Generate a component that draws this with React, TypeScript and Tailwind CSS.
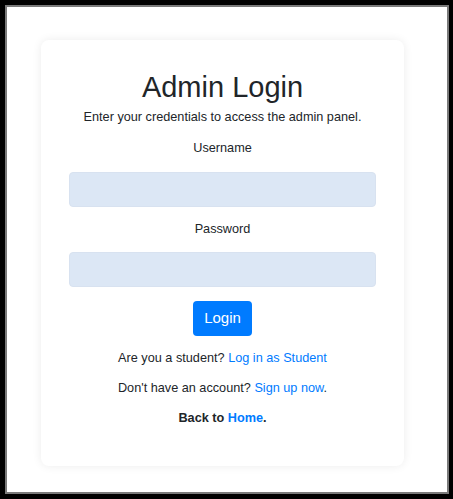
import React from 'react';

const App: React.FC = () => {
  return (
    <div className="w-[453px] h-[499px] bg-black pl-[5px] pt-[5px] pr-[4px] pb-[5px]" style={{ fontFamily: '"Liberation Sans", Arial, sans-serif' }}>
      <div className="w-full h-full border-2 border-[#7a7a7a] bg-white pl-[34px] pr-[41px] pt-[33px]">
        <div className="w-[363px] h-[426px] bg-white rounded-lg shadow-[0_0_10px_rgba(0,0,0,0.08)] px-[28px] pt-[29px] flex flex-col items-center text-[#212529]">
          <h2 className="text-[29px] leading-[36px] mb-[2px]">Admin Login</h2>
          <p className="text-[12.7px] leading-[20px] mb-[11px]">Enter your credentials to access the admin panel.</p>
          <label className="text-[12.7px] leading-[20px] mb-[14px]">Username</label>
          <input type="text" className="w-full h-[35px] bg-[#dce7f5] rounded-[4px] border border-[#d8e2f0] mb-[12px]" />
          <label className="text-[12.7px] leading-[20px] mb-[13px]">Password</label>
          <input type="password" className="w-full h-[35px] bg-[#dce7f5] rounded-[4px] border border-[#d8e2f0] mb-[14px]" />
          <button className="h-[35px] px-[11px] bg-[#007bff] text-white text-[15px] rounded-[4px] mb-[12px]">Login</button>
          <p className="text-[12.7px] leading-[20px] mb-[10px]">
            Are you a student? <a className="text-[#007bff]" href="#">Log in as Student</a>
          </p>
          <p className="text-[12.7px] leading-[20px] mb-[10px]">
            Don't have an account? <a className="text-[#007bff]" href="#">Sign up now</a>.
          </p>
          <p className="text-[12.7px] leading-[20px] font-bold">
            Back to <a className="text-[#007bff]" href="#">Home</a>.
          </p>
        </div>
      </div>
    </div>
  );
};

export default App;
